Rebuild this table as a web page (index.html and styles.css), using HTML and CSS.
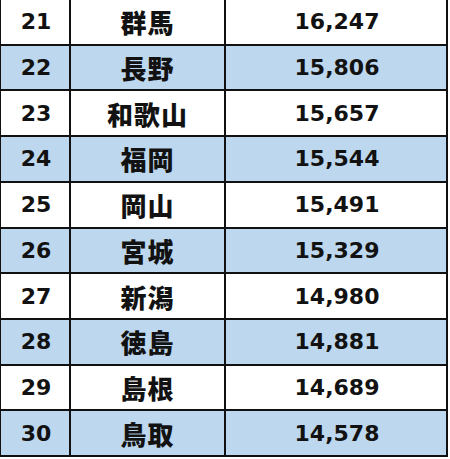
FILE: index.html
```html
<!DOCTYPE html>
<html lang="ja">
<head>
<meta charset="utf-8">
<link rel="stylesheet" href="styles.css">
</head>
<body>
<div class="table">
  <div class="cell num">21</div><div class="cell pref">群馬</div><div class="cell val">16,247</div>
  <div class="cell num alt">22</div><div class="cell pref alt">長野</div><div class="cell val alt">15,806</div>
  <div class="cell num">23</div><div class="cell pref">和歌山</div><div class="cell val">15,657</div>
  <div class="cell num alt">24</div><div class="cell pref alt">福岡</div><div class="cell val alt">15,544</div>
  <div class="cell num">25</div><div class="cell pref">岡山</div><div class="cell val">15,491</div>
  <div class="cell num alt">26</div><div class="cell pref alt">宮城</div><div class="cell val alt">15,329</div>
  <div class="cell num">27</div><div class="cell pref">新潟</div><div class="cell val">14,980</div>
  <div class="cell num alt">28</div><div class="cell pref alt">徳島</div><div class="cell val alt">14,881</div>
  <div class="cell num">29</div><div class="cell pref">島根</div><div class="cell val">14,689</div>
  <div class="cell num alt">30</div><div class="cell pref alt">鳥取</div><div class="cell val alt">14,578</div>
</div>
</body>
</html>
```

FILE: styles.css
```css
html, body {
  margin: 0;
  padding: 0;
  background: #ffffff;
}

.table {
  display: grid;
  grid-template-columns: 68px 153px 220px;
  grid-template-rows: repeat(10, 1fr);
  gap: 2px;
  padding: 2px;
  width: 449px;
  height: 459px;
  box-sizing: border-box;
  margin: -2px 0 0 -1px;
  background: #111111;
}

.cell {
  background: #ffffff;
  display: flex;
  align-items: center;
  justify-content: center;
  color: #121212;
  font-weight: bold;
}

.cell.alt {
  background: #bdd7ee;
}

.num, .val {
  font-family: "DejaVu Sans", Verdana, sans-serif;
  font-size: 22px;
  padding-left: 2px;
}

.pref {
  font-family: "Noto Sans CJK JP", "Noto Sans", sans-serif;
  font-size: 26px;
  font-weight: 900;
  letter-spacing: 1px;
}
```
